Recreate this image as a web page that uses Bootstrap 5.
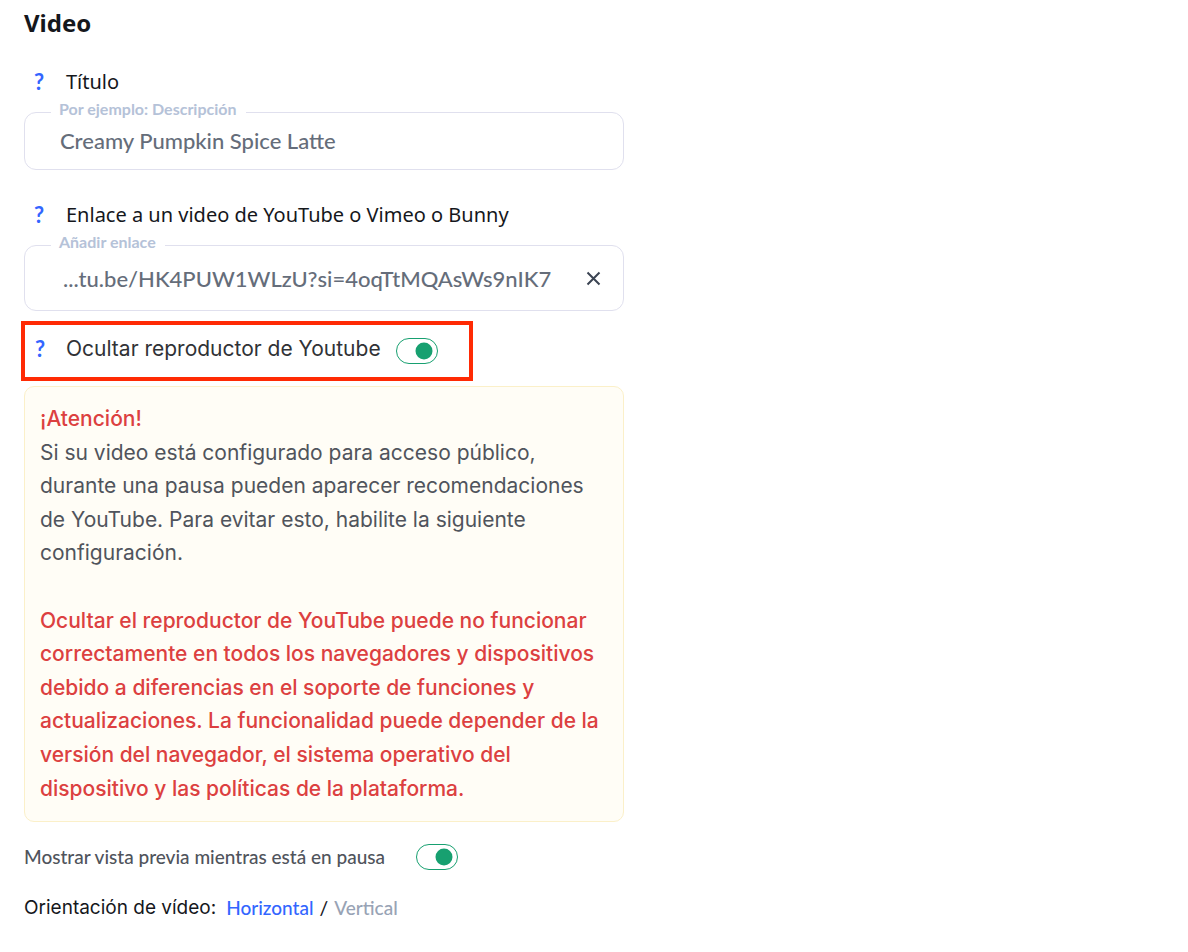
<!DOCTYPE html>
<html lang="es">
<head>
<meta charset="utf-8">
<meta name="viewport" content="width=device-width, initial-scale=1">
<title>Video</title>
<link href="https://cdn.jsdelivr.net/npm/bootstrap@5.3.0/dist/css/bootstrap.min.css" rel="stylesheet">
<style>
  body { font-family: Lato, sans-serif; color: #15171c; background: #fff; }
  .panel { max-width: 648px; padding: 7px 24px; }
  .panel-title { font: 700 24px/32px "Noto Sans", sans-serif; color: #15171c; }
  .field-block { margin-top: 27px; }
  .field-block + .field-block { margin-top: 29px; }
  .field-head { height: 32px; gap: 16px; }
  .field-label { font: 400 20px/32px "Noto Sans", sans-serif; }
  .help { width: 26px; padding: 0 0 0 4px; border: 0; background: none; color: #3366ff; font: 700 22px/32px Lato, sans-serif; text-align: center; }
  .outlined { border: 1px solid #e0e0ee; border-radius: 12px; margin-top: 14px; }
  .outlined .hint { position: absolute; top: -16px; left: 26px; padding: 0 9px 0 8px; background: #fff; color: #b5c2d8; font: 700 16px/24px Lato, sans-serif; }
  .outlined .form-control { border: 0; background: none; box-shadow: none; color: #656d7a; font: 500 22px/32px Lato, sans-serif; padding: 12px 35px; }
  .outlined .link-input { padding: 17px 0 15px 38px; }
  .clear-btn { border: 0; background: none; padding: 0 22px; line-height: 0; }
  .marked { border: 4px solid #ff2a04; margin: 10px 0 5px -3px; padding: 8px 31px 12px 0; height: 60px; }
  .marked .field-head { gap: 15px; }
  .marked .field-label { font-family: Inter, sans-serif; font-size: 21px; color: #303236; }
  .switch.form-check-input { width: 42px; height: 26px; margin: 0; border: 1px solid #17a070; border-radius: 13px; background-color: #fff; box-shadow: none; }
  .marked .switch.form-check-input { margin-top: 4px; }
  .switch.form-check-input:checked { border-color: #17a070; background-color: #fff; background-size: 18px 18px; background-repeat: no-repeat; background-position: right 4px center;
    background-image: url("data:image/svg+xml,%3Csvg xmlns='http://www.w3.org/2000/svg' viewBox='0 0 18 18'%3E%3Ccircle cx='9' cy='9' r='8.5' fill='%2317a070'/%3E%3C/svg%3E"); }
  .notice { border: 1px solid #fbf0c9; border-radius: 10px; background: #fffdf6; padding: 15px 15px 16px; color: #50545c; font: 400 21px/1.6 Inter, sans-serif; }
  .notice strong { font-weight: 500; color: #dc4040; }
  .preview-row { margin-top: 22px; gap: 31px; color: #50545c; font: 500 19px/26px Lato, sans-serif; }
  .orient { margin-top: 24px; font: 500 19px/28px Lato, sans-serif; gap: 6px; }
  .orient .caption { font: 400 19px/28px Inter, sans-serif; padding-right: 4px; }
  .orient a { color: #3366ff; }
  .orient a.off { color: #98a3b5; }
</style>
</head>
<body>
<main class="panel">
  <h1 class="panel-title mb-0">Video</h1>

  <section class="field-block">
    <div class="field-head d-flex align-items-center">
      <button type="button" class="help" aria-label="Ayuda">?</button>
      <label class="field-label" for="titulo">Título</label>
    </div>
    <div class="outlined position-relative">
      <label class="hint" for="titulo">Por ejemplo: Descripción</label>
      <input id="titulo" type="text" class="form-control" value="Creamy Pumpkin Spice Latte">
    </div>
  </section>

  <section class="field-block">
    <div class="field-head d-flex align-items-center">
      <button type="button" class="help" aria-label="Ayuda">?</button>
      <label class="field-label" for="enlace">Enlace a un video de YouTube o Vimeo o Bunny</label>
    </div>
    <div class="outlined position-relative d-flex align-items-center">
      <label class="hint" for="enlace">Añadir enlace</label>
      <input id="enlace" type="text" class="form-control link-input" value="...tu.be/HK4PUW1WLzU?si=4oqTtMQAsWs9nIK7">
      <button type="button" class="clear-btn" aria-label="Borrar">
        <svg width="15" height="15" viewBox="0 0 15 15" fill="none" stroke="#3b4453" stroke-width="2"><path d="M1.5 1.5l12 12M13.5 1.5l-12 12"/></svg>
      </button>
    </div>
  </section>

  <div class="marked d-inline-flex align-items-start">
    <div class="field-head d-flex align-items-center">
      <button type="button" class="help" aria-label="Ayuda">?</button>
      <label class="field-label" for="ocultar">Ocultar reproductor de Youtube</label>
      <input id="ocultar" type="checkbox" role="switch" class="form-check-input switch" checked>
    </div>
  </div>

  <div class="notice">
    <strong>¡Atención!</strong>
    <div>Si su video está configurado para acceso público, durante una pausa pueden aparecer recomendaciones de YouTube. Para evitar esto, habilite la siguiente configuración.</div>
    <br>
    <strong>Ocultar el reproductor de YouTube puede no funcionar correctamente en todos los navegadores y dispositivos debido a diferencias en el soporte de funciones y actualizaciones. La funcionalidad puede depender de la versión del navegador, el sistema operativo del dispositivo y las políticas de la plataforma.</strong>
  </div>

  <div class="preview-row d-flex align-items-center">
    <label for="previa">Mostrar vista previa mientras está en pausa</label>
    <input id="previa" type="checkbox" role="switch" class="form-check-input switch" checked>
  </div>

  <div class="orient d-flex align-items-center">
    <span class="caption">Orientación de vídeo:</span>
    <a href="#horizontal" class="text-decoration-none">Horizontal</a>
    <span>/</span>
    <a href="#vertical" class="off text-decoration-none">Vertical</a>
  </div>
</main>
<script src="https://cdn.jsdelivr.net/npm/bootstrap@5.3.0/dist/js/bootstrap.bundle.min.js"></script>
</body>
</html>
